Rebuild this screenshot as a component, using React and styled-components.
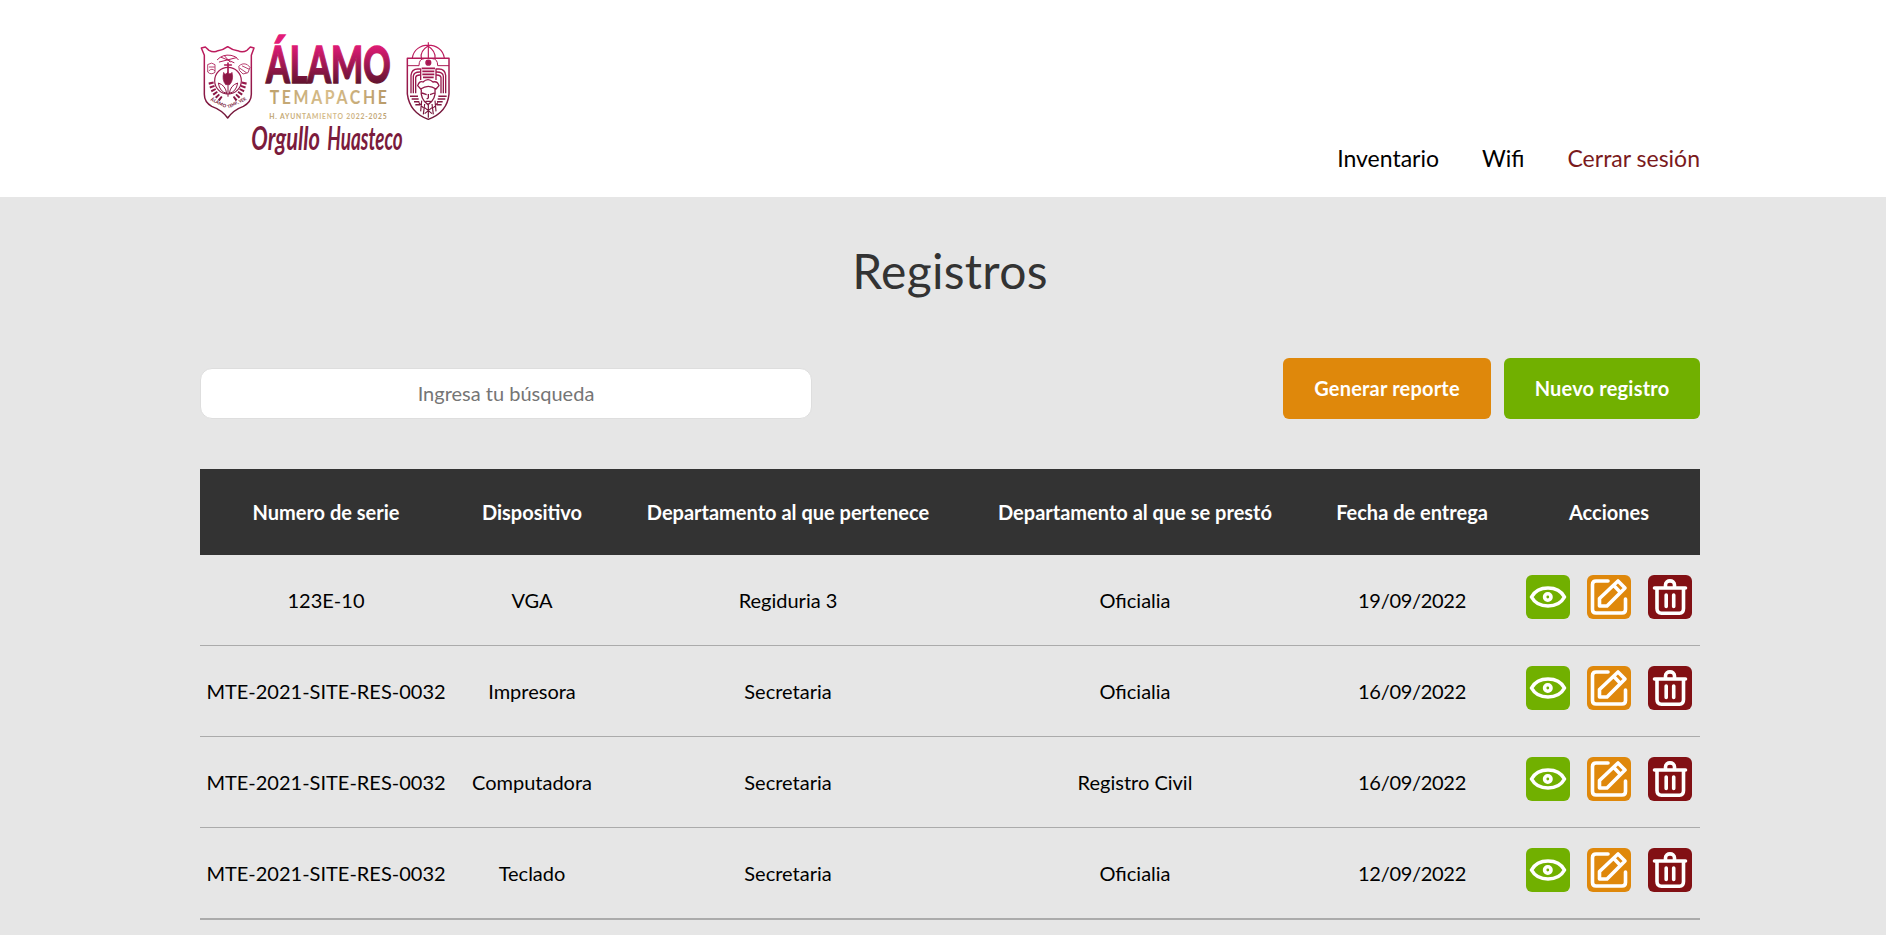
import React from "react";
import styled, { createGlobalStyle } from "styled-components";

const GlobalStyle = createGlobalStyle`
  *, *::before, *::after { box-sizing: border-box; }
  html { font-size: 62.5%; overflow: hidden; }
  body {
    margin: 0;
    width: 1900px;
    min-height: 935px;
    background: #e6e6e6;
    color: #000;
    font-family: Lato, "Liberation Sans", sans-serif;
    font-size: 2rem;
  }
`;

const Container = styled.div`
  width: 1500px;
  margin: 0 auto;
`;

const Header = styled.header`
  height: 197px;
  background: #fff;
`;

const HeaderBar = styled(Container)`
  display: flex;
  justify-content: space-between;
  align-items: flex-end;
  height: 100%;
  padding: 25px 0 24px;
`;

const Logo = styled.svg`
  align-self: flex-start;
  width: 260px;
  height: 145px;
  overflow: visible;
`;

const Nav = styled.nav`
  display: flex;
  gap: 43px;
`;

const NavLink = styled.a`
  color: ${(p) => (p.$danger ? "#7a1a1c" : "#000")};
  font-size: 2.3rem;
  line-height: 29px;
  text-decoration: none;
`;

const Title = styled.h1`
  margin: 45px 0 0;
  color: #333;
  font-size: 4.8rem;
  font-weight: 400;
  letter-spacing: 0.3px;
  line-height: 58px;
  text-align: center;
`;

const Toolbar = styled.div`
  display: flex;
  justify-content: space-between;
  align-items: flex-end;
  height: 62px;
  margin: 58px 0 49px;
`;

const Search = styled.input`
  width: 612px;
  height: 51px;
  margin-bottom: 1px;
  padding: 0 2px 2px;
  border: 1px solid #dedede;
  border-radius: 12px;
  background: #fff;
  font: 400 2rem Lato, sans-serif;
  text-align: center;
  &::placeholder { color: #757575; opacity: 1; }
`;

const Buttons = styled.div`
  display: flex;
  gap: 13px;
`;

const Button = styled.button`
  width: ${(p) => p.$width}px;
  height: 61px;
  margin-bottom: 1px;
  padding: 0 0 2px;
  border: 0;
  border-radius: 6px;
  background: ${(p) => p.$color};
  color: #fff;
  font: 700 2rem Lato, sans-serif;
  letter-spacing: 0.2px;
`;

const Table = styled.table`
  width: 100%;
  table-layout: fixed;
  border-collapse: separate;
  border-spacing: 0;
  border-bottom: 1px solid #ababab;
`;

const Col = styled.col`
  width: ${(p) => p.$width}px;
`;

const HeadCell = styled.th`
  height: 86px;
  padding: 0;
  background: #333;
  color: #fff;
  font-weight: 700;
  white-space: nowrap;
`;

const Cell = styled.td`
  height: 91px;
  padding: 0;
  border-bottom: 1px solid #ababab;
  letter-spacing: ${(p) => (p.$tight ? "-0.3px" : "normal")};
  text-align: center;
  white-space: nowrap;
`;

const Actions = styled.div`
  display: flex;
  justify-content: center;
  gap: 17px;
  padding-bottom: 7px;
`;

const Action = styled.button`
  display: flex;
  width: 44px;
  height: 44px;
  padding: 0;
  border: 0;
  border-radius: 6px;
  background: ${(p) => p.$color};
`;

const Icon = styled.svg`
  width: 44px;
  height: 44px;
  fill: none;
  stroke: #fff;
  stroke-width: 3.6;
  stroke-linecap: round;
  stroke-linejoin: round;
`;

const Word = styled.text`
  font-family: Lato, sans-serif;
  font-weight: ${(p) => p.$weight};
  font-style: ${(p) => p.$style || "normal"};
  font-size: ${(p) => p.$size}px;
`;

const EyeIcon = () => (
  <Icon viewBox="0 0 44 43">
    <path d="M5.5 21.5C12 9.5 32 9.5 38.5 21.5C32 33.5 12 33.5 5.5 21.5Z" />
    <circle cx="21.8" cy="21.5" r="3.2" />
  </Icon>
);

const EditIcon = () => (
  <Icon viewBox="0 0 44 43">
    <path d="M21 5.5H9Q5.500 5.500 5.500 9V34Q5.500 37.500 9 37.500H35Q38.500 37.500 38.500 34V23.500" />
    <path d="M12.500 30.500V23L31 5.500L38 12.500L20 30.500ZM26.800 10L33.500 17" />
  </Icon>
);

const TrashIcon = () => (
  <Icon viewBox="0 0 44 43">
    <path d="M6.500 12.500H37.500M9 13V33Q9 37.700 13.500 37.700H31.500Q35.500 37.700 35.500 33V13M17.500 11.500V9.500C17.500 4 26.500 4 26.500 9.500V11.500M18.200 19.500V31M25.700 19.500V31" />
  </Icon>
);

const Shield = () => (
  <g fill="none" stroke="url(#wine)" strokeWidth="4.500" strokeLinejoin="round" strokeLinecap="round">
    <path d="M34 69L46 66L57 76Q72 84 84 77Q100 75 113 65Q126 75 143 77Q157 84 171 76L181 66L192 69L184 91V208Q184 232 160 244Q130 255 113 279Q96 255 65 244Q43 232 43 208V91Z" />
    <path d="M82 104Q98 87 123 91Q139 93 145 104M88 111L139 98M94 97L132 113M103 92L120 111" strokeWidth="3" />
    <path d="M104 120H124M114 114V144" strokeWidth="5" />
    <circle cx="114" cy="167" r="40" strokeWidth="3.500" />
    <path d="M113 142Q104 153 101 142Q95 165 107 179H119Q132 165 126 142Q120 151 113 142Z" fill="#8c1945" strokeWidth="2" />
    <path d="M114 177V214M110 205Q107 181 85 174Q89 201 110 205ZM118 205Q121 181 143 174Q139 201 118 205Z" strokeWidth="3" />
    <path d="M54 118Q66 110 75 119V142Q63 151 54 142ZM58 126H73M57 137Q66 128 74 137M147 123Q158 112 172 119L180 127L174 143L159 147L149 137ZM150 130L169 143M157 123L176 132" strokeWidth="2.500" />
    <path d="M63 171Q69 206 94 223M163 171Q157 206 132 223" strokeWidth="15" strokeDasharray="6 5" strokeLinecap="butt" />
    <g fill="#7a1a3c" stroke="none">
      <Word $size={14} $weight={900} transform="translate(61 226) rotate(27)" textLength="50" lengthAdjust="spacingAndGlyphs">ÁLAMO</Word>
      <Word $size={13} $weight={900} transform="translate(115 250) rotate(-25)" textLength="62" lengthAdjust="spacingAndGlyphs">TEMP., VER.</Word>
    </g>
  </g>
);

const Emblem = () => (
  <g fill="none" stroke="url(#wine)" strokeWidth="4.500" strokeLinejoin="round">
    <path d="M667 99C674 48 755 47 763 99M694 99Q690 78 714 63Q737 78 735 99M715 52V99" strokeWidth="3.500" />
    <path d="M652 100H777V207Q772 262 715 283Q659 263 652 207Z" />
    <path d="M654 122H687Q687 101 703 101M727 101Q743 101 743 122H777" strokeWidth="3" />
    <circle cx="715" cy="113" r="7" fill="#a01850" />
    <path d="M695 130H735M697 139H733M697 148H733M699 157H731" strokeWidth="5" />
    <path d="M663 205V151Q665 132 683 132H692V165M670 205V153Q672 140 692 141M677 205V157Q679 149 692 150M767 205V151Q765 132 747 132H738V165M760 205V153Q758 140 738 141M753 205V157Q751 149 738 150" strokeWidth="4" />
    <path d="M660 214H684M665 222H686M672 230H688M745 214H770M743 222H766M741 230H758M676 239H690M740 239H755" strokeWidth="4.500" />
    <path d="M683 182Q688 166 699 171Q714 157 729 171Q742 167 747 182L738 192Q715 176 692 192ZM694 191Q690 223 714 239Q739 223 735 191M696 204L710 209M720 209L733 204M715 207V219L710 222M707 229H722" strokeWidth="4" />
    <path d="M686 232L700 249M695 227L692 259M704 237L700 268M744 232L730 249M735 227L738 259M726 237L730 268M704 248L726 266M726 248L704 266M715 240V278" strokeWidth="3.500" />
  </g>
);

const LogoMark = () => (
  <Logo viewBox="30 0 780 435" role="img" aria-label="Álamo Temapache">
    <defs>
      <linearGradient id="wine" x1="0" y1="60" x2="0" y2="285" gradientUnits="userSpaceOnUse">
        <stop offset="0" stopColor="#c21c60" />
        <stop offset="1" stopColor="#6d1737" />
      </linearGradient>
      <linearGradient id="pink" x1="0" y1="30" x2="0" y2="172" gradientUnits="userSpaceOnUse">
        <stop offset="0.200" stopColor="#e31b78" />
        <stop offset="1" stopColor="#651431" />
      </linearGradient>
      <linearGradient id="gold" x1="0" y1="0" x2="429" y2="0" gradientUnits="userSpaceOnUse">
        <stop offset="0" stopColor="#bda16d" />
        <stop offset="0.500" stopColor="#d7bd8a" />
        <stop offset="1" stopColor="#b99b69" />
      </linearGradient>
    </defs>
    <Shield />
    <Word $size={152} $weight={900} x="228" y="173" textLength="374" lengthAdjust="spacingAndGlyphs" fill="url(#pink)" stroke="url(#pink)" strokeWidth="4">ÁLAMO</Word>
    <Word $size={58} $weight={700} transform="translate(239 237) scale(0.82 1)" textLength="429" fill="url(#gold)">TEMAPACHE</Word>
    <Word $size={24} $weight={700} transform="translate(238 282) scale(0.85 1)" textLength="414" fill="url(#gold)">H. AYUNTAMIENTO 2022-2025</Word>
    <Word $size={100} $weight={700} $style="italic" x="184" y="376" textLength="206" lengthAdjust="spacingAndGlyphs" fill="#7b1b3c">Orgullo</Word>
    <Word $size={100} $weight={700} $style="italic" x="412" y="374" textLength="226" lengthAdjust="spacingAndGlyphs" fill="#7b1b3c">Huasteco</Word>
    <Emblem />
  </Logo>
);

const columns = [
  ["Numero de serie", 252],
  ["Dispositivo", 160],
  ["Departamento al que pertenece", 352],
  ["Departamento al que se prestó", 342],
  ["Fecha de entrega", 212],
  ["Acciones", 182],
];

const records = [
  ["123E-10", "VGA", "Regiduria 3", "Oficialia", "19/09/2022"],
  ["MTE-2021-SITE-RES-0032", "Impresora", "Secretaria", "Oficialia", "16/09/2022"],
  ["MTE-2021-SITE-RES-0032", "Computadora", "Secretaria", "Registro Civil", "16/09/2022"],
  ["MTE-2021-SITE-RES-0032", "Teclado", "Secretaria", "Oficialia", "12/09/2022"],
];

export default function App() {
  return (
    <>
      <GlobalStyle />
      <Header>
        <HeaderBar>
          <LogoMark />
          <Nav>
            <NavLink>Inventario</NavLink>
            <NavLink>Wifi</NavLink>
            <NavLink $danger>Cerrar sesión</NavLink>
          </Nav>
        </HeaderBar>
      </Header>
      <Container as="main">
        <Title>Registros</Title>
        <Toolbar>
          <Search placeholder="Ingresa tu búsqueda" />
          <Buttons>
            <Button $color="#df880b" $width={208}>Generar reporte</Button>
            <Button $color="#71b000" $width={196}>Nuevo registro</Button>
          </Buttons>
        </Toolbar>
        <Table>
          <colgroup>
            {columns.map(([name, width]) => <Col key={name} $width={width} />)}
          </colgroup>
          <thead>
            <tr>{columns.map(([name]) => <HeadCell key={name}>{name}</HeadCell>)}</tr>
          </thead>
          <tbody>
            {records.map((record, i) => (
              <tr key={i}>
                {record.map((value, j) => <Cell key={j} $tight={j === 4}>{value}</Cell>)}
                <Cell>
                  <Actions>
                    <Action $color="#71b000" aria-label="Ver"><EyeIcon /></Action>
                    <Action $color="#df880b" aria-label="Editar"><EditIcon /></Action>
                    <Action $color="#821014" aria-label="Eliminar"><TrashIcon /></Action>
                  </Actions>
                </Cell>
              </tr>
            ))}
          </tbody>
        </Table>
      </Container>
    </>
  );
}
